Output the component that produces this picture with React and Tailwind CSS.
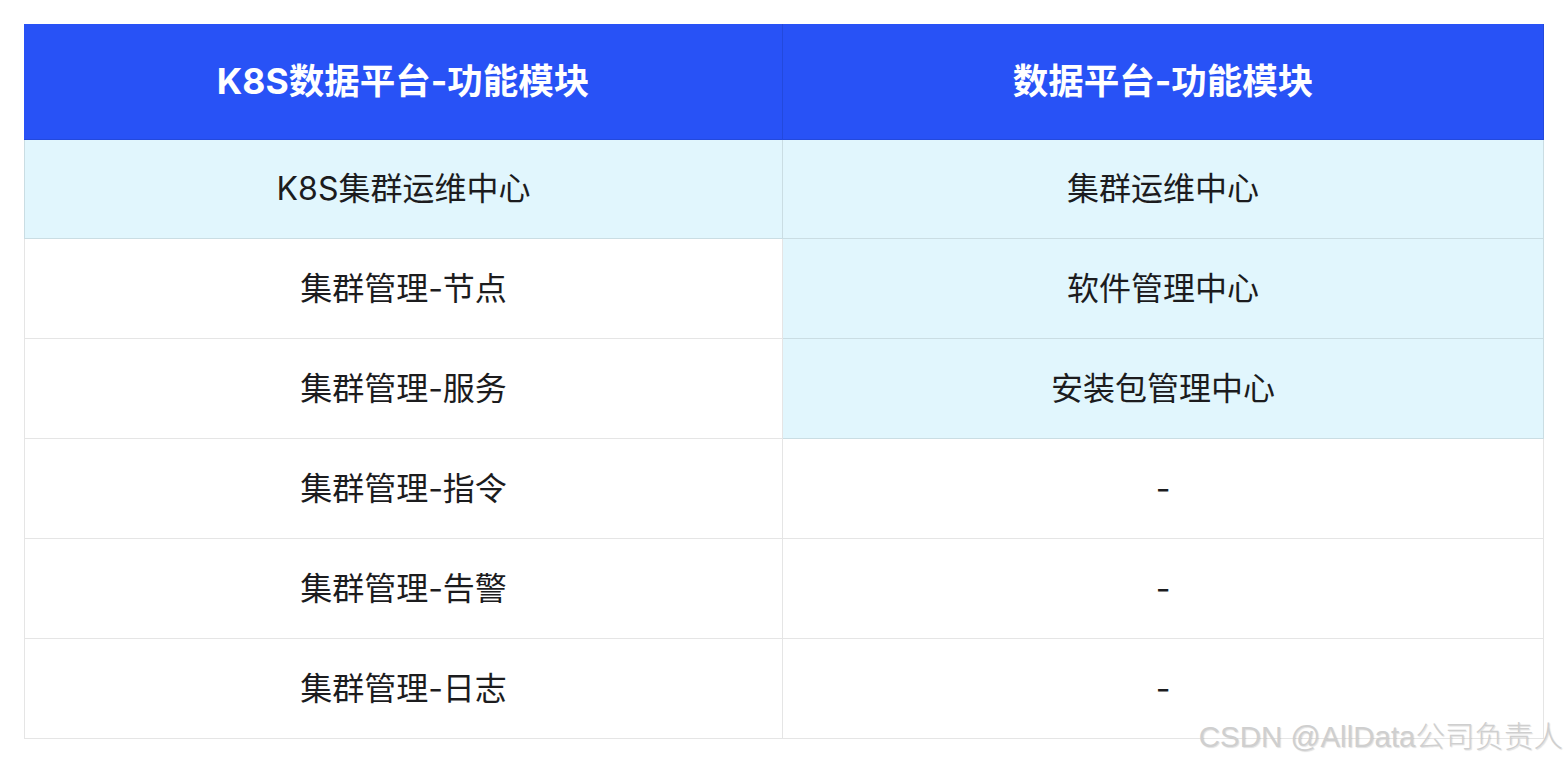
import React from "react";

const rows = [
  { left: "K8S集群运维中心", right: "集群运维中心", lb: true, rb: true, h: "h-[99px]" },
  { left: "集群管理-节点", right: "软件管理中心", lb: false, rb: true, h: "h-[100px]" },
  { left: "集群管理-服务", right: "安装包管理中心", lb: false, rb: true, h: "h-[100px]" },
  { left: "集群管理-指令", right: "-", lb: false, rb: false, h: "h-[100px]" },
  { left: "集群管理-告警", right: "-", lb: false, rb: false, h: "h-[100px]" },
  { left: "集群管理-日志", right: "-", lb: false, rb: false, h: "h-[100px]" },
];

export default function App() {
  return (
    <div className="relative w-[1568px] h-[764px] bg-white pt-[24px] pl-[24px] font-['Inter','Noto_Sans_CJK_SC',sans-serif]">
      <div className="w-[1520px] flex flex-col">
        <div className="flex h-[116px] bg-[#2852F6]">
          <div className="w-[759px] border-r border-b border-black/10 flex items-center justify-center text-white font-bold text-[35.5px]">
            K8S数据平台-功能模块
          </div>
          <div className="w-[761px] border-r border-b border-black/10 flex items-center justify-center text-white font-bold text-[35.5px]">
            数据平台-功能模块
          </div>
        </div>
        {rows.map((r, i) => (
          <div key={i} className={`flex ${r.h}`}>
            <div
              className={`w-[759px] border-l border-r border-b border-black/10 flex items-center justify-center text-[32px] text-[#1c1c1e] ${
                r.lb ? "bg-[#E1F6FD]" : "bg-white"
              }`}
            >
              {r.left}
            </div>
            <div
              className={`w-[761px] border-r border-b border-black/10 flex items-center justify-center text-[32px] text-[#1c1c1e] ${
                r.rb ? "bg-[#E1F6FD]" : "bg-white"
              }`}
            >
              {r.right}
            </div>
          </div>
        ))}
      </div>
      <div className="absolute right-[5px] top-[717px] text-[29.5px] leading-[40px] text-[#cfcfcf] font-['Liberation_Sans','Noto_Sans_CJK_SC',sans-serif] font-light [text-shadow:1px_1px_1px_rgba(0,0,0,0.12)]">
        CSDN @AllData公司负责人
      </div>
    </div>
  );
}
